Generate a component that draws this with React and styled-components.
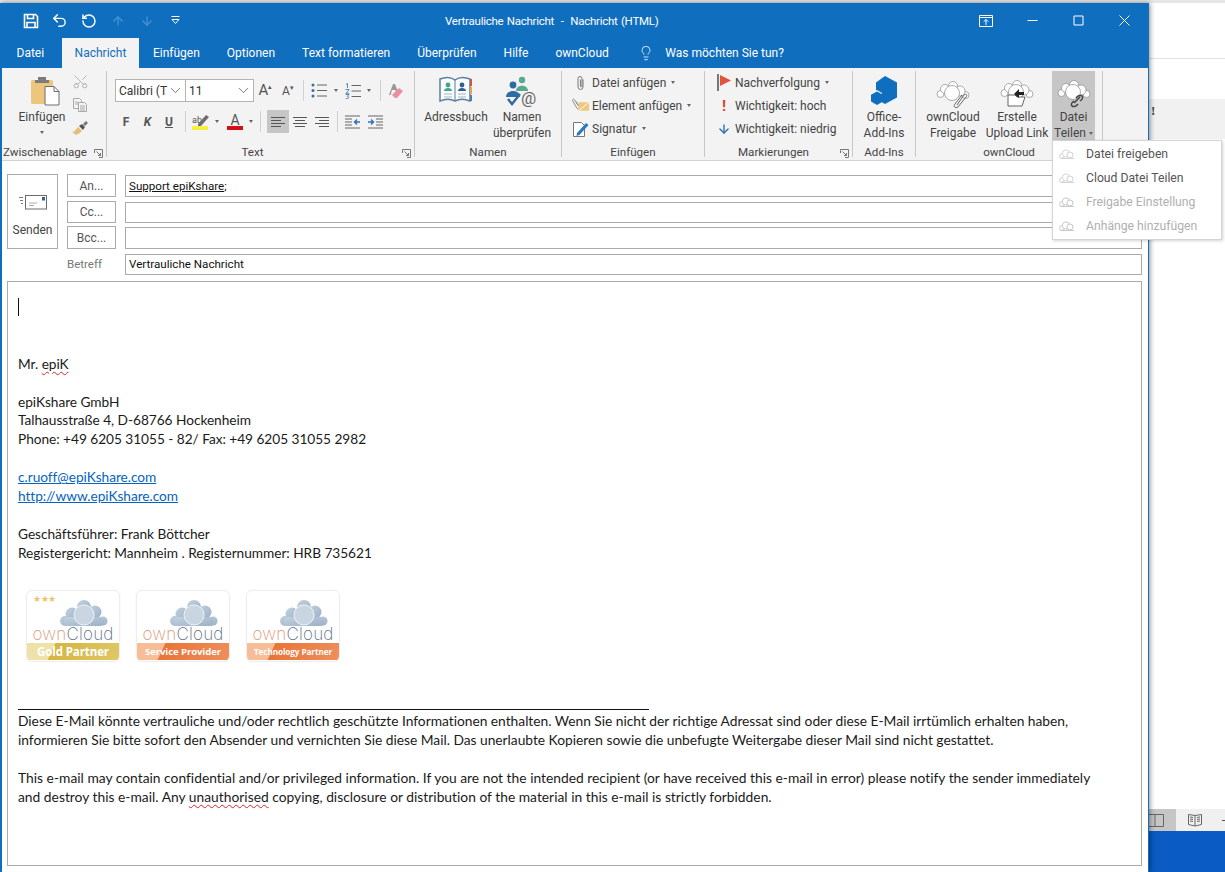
import React from "react";
import styled, { createGlobalStyle } from "styled-components";
import { ArrowUp, ArrowDown, ChevronDown, Lightbulb, RotateCcw, Scissors, Undo2 } from "lucide-react";

const UI = `Roboto, "Noto Sans", sans-serif`;

const GlobalStyle = createGlobalStyle`
  html, body { margin: 0; padding: 0; background: #fff; }
  body { font-family: ${UI}; overflow: hidden; }
  * { box-sizing: border-box; }
`;

/* ---------- small drawings ---------- */

const SaveIcon = () => (
  <svg width="16" height="16" viewBox="0 0 16 16" fill="none" stroke="#fff" strokeWidth="1.6">
    <path d="M1.5 1.5h11l2 2v11h-13z" />
    <path d="M4.5 1.5v4h6v-4M4 14.5v-5h8v5" />
  </svg>
);

const CustomizeIcon = () => (
  <svg width="11" height="11" viewBox="0 0 11 11" fill="none" stroke="#fff" strokeWidth="1">
    <path d="M1.5 1.5h8M2 4.5h7L5.5 8.5z" />
  </svg>
);

const RibbonDisplayIcon = () => (
  <svg width="14" height="12" viewBox="0 0 14 12" fill="none" stroke="#fff" strokeWidth="1">
    <path d="M.5 .5h13v11H.5zM.5 2.5h13M7 10V4.500M4.700 6.700 7 4.400l2.300 2.300" />
  </svg>
);

const MinIcon = () => (
  <svg width="11" height="11" viewBox="0 0 11 11" stroke="#fff"><path d="M.5 5.5h10" /></svg>
);
const MaxIcon = () => (
  <svg width="11" height="11" viewBox="0 0 11 11" fill="none" stroke="#fff"><path d="M1 1h9v9H1z" /></svg>
);
const CloseIcon = () => (
  <svg width="11" height="11" viewBox="0 0 11 11" stroke="#fff"><path d="M.5.5l10 10M10.5.5l-10 10" /></svg>
);

const PasteIcon = () => (
  <svg width="30" height="30" viewBox="0 0 30 30">
    <rect x="1" y="4" width="22" height="24" rx="1.5" fill="#ecc67d" />
    <path d="M8 4h8V1h-8z M5 4h14v3H5z" fill="#7b7b7b" />
    <path d="M15 10.500h9l5 5v13.500H15z" fill="#fff" stroke="#6e6e6e" />
    <path d="M24 10.500v5h5" fill="none" stroke="#6e6e6e" />
  </svg>
);

const CutIcon = styled(Scissors)`
  transform: rotate(-90deg);
`;

const CopyIcon = () => (
  <svg width="16" height="16" viewBox="0 0 16 16" fill="#f4f4f4" stroke="#a9a9a9">
    <path d="M1.500 1.500h6l2 2v8h-8z" />
    <path d="M6.500 5.500h6l2 2v7h-8z" />
    <path d="M3 5h3M3 7h3M8 9h5M8 11h5M8 13h5" fill="none" />
  </svg>
);

const PainterIcon = () => (
  <svg width="18" height="16" viewBox="0 0 18 16">
    <path d="M1 12c3 0 4-3 6-5l4 4c-2 2-4 3-6 4z" fill="#e4bf78" />
    <path d="M8 6l3-2 3 3-2 3z" fill="#555" />
    <path d="M12 4l3-3 2 2-3 3z" fill="#777" />
  </svg>
);

const Launcher = () => (
  <svg width="9" height="9" viewBox="0 0 9 9" fill="none" stroke="#777">
    <path d="M.5 4V.5h8v8H5" />
    <path d="M2.500 2.500l4 4M6.500 4v2.500H4" />
  </svg>
);

const BulletsIcon = () => (
  <svg width="16" height="15" viewBox="0 0 16 15" fill="none">
    <g fill="#3f6f9f"><circle cx="2" cy="2" r="1.500" /><circle cx="2" cy="7.500" r="1.500" /><circle cx="2" cy="13" r="1.500" /></g>
    <path d="M6 2h10M6 7.500h10M6 13h10" stroke="#666" />
  </svg>
);

const NumberIcon = () => (
  <svg width="16" height="16" viewBox="0 0 16 16" fill="none">
    <path d="M1 1.500l1.500-1V5M.5 6.500h3.500v.8L.8 10.300h3.400M.7 11.500h3.400l-1.800 1.800c2 0 2 2.200 0 2.200H.7" stroke="#3f6f9f" strokeWidth=".8" />
    <path d="M6.500 2.500h9.500M6.500 8h9.500M6.500 13.500h9.500" stroke="#666" />
  </svg>
);

const EraserIcon = () => (
  <svg width="16" height="16" viewBox="0 0 16 16">
    <path d="M1 12 5 1h2l3 8H8l-.7-2H4l-1.300 5z" fill="#9a9a9a" />
    <path d="M4 12l7-7 4 3-6 7H7z" fill="#ee8d9f" />
  </svg>
);

const HighlightIcon = () => (
  <svg width="18" height="18" viewBox="0 0 18 18">
    <text x="0" y="10" fontSize="9" fontFamily="Roboto, sans-serif" fill="#555">ab</text>
    <path d="M6 11 14 2l3 2-8 9H6z" fill="#6d6d6d" />
    <rect x="0" y="13" width="16" height="4" fill="#f6f03c" />
  </svg>
);

const FontColorBar = styled.span`
  display: block;
  width: 16px;
  height: 4px;
  background: #d40f14;
  margin-top: -1px;
`;

const AlignIcon = ({ type }) => {
  const lines = {
    left: ["M1 2.500h14", "M1 5.500h10", "M1 8.500h14", "M1 11.500h10"],
    center: ["M1 2.500h14", "M3 5.500h10", "M1 8.500h14", "M3 11.500h10"],
    right: ["M1 2.500h14", "M5 5.500h10", "M1 8.500h14", "M5 11.500h10"],
  }[type];
  return (
    <svg width="16" height="14" viewBox="0 0 16 14" fill="none" stroke="#555">
      {lines.map((d) => <path key={d} d={d} />)}
    </svg>
  );
};

const IndentIcon = ({ flip }) => (
  <svg width="16" height="14" viewBox="0 0 16 14" fill="none" style={flip ? { transform: "scaleX(-1)" } : undefined}>
    <path d="M1 1.500h15M9 4.500h7M9 7.500h7M9 10.500h7M1 13.500h15" stroke="#666" transform="translate(0 -.5)" />
    <path d="M1 7h5M4 4.500 6.500 7 4 9.500" stroke="#2f6fb0" strokeWidth="1.400" />
  </svg>
);

const AddressBookIcon = () => (
  <svg width="34" height="28" viewBox="0 0 34 28">
    <path d="M1 3c5-2 11-2 15 1 4-3 10-3 15-1v22c-5-2-11-2-15 0-4-2-10-2-15 0z" fill="#fbfbfb" stroke="#5b7fa3" strokeWidth="1.500" />
    <path d="M16 4v21" stroke="#5b7fa3" />
    <circle cx="9" cy="9" r="2.400" fill="#3fa58c" />
    <path d="M5 15c0-4 8-4 8 0z" fill="#3fa58c" />
    <circle cx="23" cy="9" r="2.400" fill="#2c5f93" />
    <path d="M19 15c0-4 8-4 8 0z" fill="#2c5f93" />
    <path d="M5 18h8M5 21h8M19 18h8M19 21h8" stroke="#a8b6c4" />
    <rect x="31" y="3" width="2" height="7" fill="#d1573a" />
    <rect x="31" y="11" width="2" height="7" fill="#e2a74e" />
    <rect x="31" y="19" width="2" height="6" fill="#4f7ea8" />
  </svg>
);

const NamesIcon = () => (
  <svg width="34" height="32" viewBox="0 0 34 32">
    <circle cx="17" cy="4" r="3.200" fill="#57a98f" />
    <path d="M11 15c0-7 12-7 12 0z" fill="#57a98f" />
    <circle cx="8" cy="9" r="3.400" fill="#2f6aa3" />
    <path d="M1 21c0-8 14-8 14 0z" fill="#2f6aa3" />
    <path d="M3 23l4 5 8-10" fill="none" stroke="#2f6aa3" strokeWidth="2.400" />
    <text x="16" y="28" fontSize="17" fontFamily="Roboto, sans-serif" fill="#666">@</text>
  </svg>
);

const ClipIcon = () => (
  <svg width="10" height="16" viewBox="0 0 10 16" fill="none" stroke="#777" strokeWidth="1">
    <path d="M7 4.500v7.500a2.500 2.500 0 0 1-5 0V3.500a2 2 0 0 1 4 0V11a.8.8 0 0 1-1.600 0V4.500" />
  </svg>
);

const AttachItemIcon = () => (
  <svg width="20" height="15" viewBox="0 0 20 15" fill="none">
    <path d="M8 8 4 2C3 0 1 1 2 3l4 7c1 2 4 1 3-1L5 3" stroke="#888" />
    <rect x="8" y="4" width="11" height="9" fill="#f0c77e" />
    <path d="M8 13l11-9" stroke="#fff" />
  </svg>
);

const SignatureIcon = () => (
  <svg width="18" height="18" viewBox="0 0 18 18" fill="none">
    <path d="M1.500 2.500h8l3 3v11h-11z" fill="#fff" stroke="#777" />
    <path d="M5 13 14 3l2.500 2-9 10-3 1z" fill="#2f79bd" />
  </svg>
);

const FlagIcon = () => (
  <svg width="14" height="17" viewBox="0 0 14 17">
    <rect x="0" y="0" width="2" height="17" fill="#777" />
    <path d="M3 1l11 5.500L3 12z" fill="#e0533d" />
  </svg>
);

const HexIcon = () => (
  <svg width="28" height="30" viewBox="0 0 28 30" fill="#106ebe">
    <path d="M15 0l12 6.500v15L15 28l-3-1.700V17l-5-3-1 .6V6.500z" />
    <path d="M7 15.500l6 3.300v6.700L7 29l-6-3.500v-6.700z" />
  </svg>
);

const CloudOutline = ({ children }) => (
  <svg width="34" height="28" viewBox="0 0 34 28" fill="#fff" stroke="#8a8a8a" strokeWidth=".7">
    <circle cx="4.500" cy="13" r="3.500" />
    <circle cx="29.500" cy="14" r="3.500" />
    <circle cx="24" cy="10" r="5" />
    <circle cx="9" cy="8" r="4.500" />
    <circle cx="17" cy="5" r="4.500" />
    <circle cx="16" cy="12" r="7.500" />
    {children}
  </svg>
);

const MenuCloud = ({ disabled }) => (
  <svg width="17" height="11" viewBox="0 0 17 11" fill="#fff" stroke={disabled ? "#bbb" : "#c9c9c9"} strokeWidth=".8">
    <circle cx="3" cy="7" r="2.400" />
    <circle cx="7" cy="4.500" r="3.600" />
    <circle cx="11" cy="6" r="3" />
    <path d="M2 9.500h13" />
  </svg>
);

const SendIcon = () => (
  <svg width="28" height="15" viewBox="0 0 28 15" fill="none">
    <path d="M0 2.500h4M1 5.500h3M2 8.500h2" stroke="#7a7a7a" />
    <rect x="6.500" y=".5" width="21" height="13.500" fill="#fff" stroke="#6b6b6b" />
    <path d="M10 8h8M10 10.500h5" stroke="#aaa" />
    <rect x="23" y="2" width="3" height="3.500" fill="#2f6496" />
  </svg>
);

const BookIcon = () => (
  <svg width="14" height="14" viewBox="0 0 14 14" fill="none" stroke="#666">
    <path d="M.5 1.500 7 2.500l6.500-1v10L7 13 .5 11.500zM7 2.500V13M2 4l3 .5M2 6l3 .5M2 8l3 .5M9 4.500 12 4M9 6.500 12 6M9 8.500 12 8" />
  </svg>
);

const SplitIcon = () => (
  <svg width="15" height="13" viewBox="0 0 15 13" fill="none" stroke="#666">
    <path d="M0 .5h14.500v12H0M6 .5v12" />
  </svg>
);

const BadgeCloud = () => (
  <svg width="48" height="28" viewBox="0 0 48 28">
    <defs>
      <linearGradient id="cloudFill" x1="0" y1="0" x2="1" y2="1">
        <stop offset="0" stopColor="#c4d2e0" />
        <stop offset="1" stopColor="#9bb0c6" />
      </linearGradient>
    </defs>
    <g fill="url(#cloudFill)">
      <circle cx="24" cy="7" r="7" />
      <circle cx="12" cy="14" r="6.500" />
      <circle cx="35" cy="12" r="6.500" />
      <circle cx="5" cy="21" r="5" />
      <circle cx="43" cy="21" r="4.500" />
      <rect x="4" y="17" width="40" height="9" rx="4" />
    </g>
    <circle cx="24" cy="15" r="10" fill="#c9d6e2" stroke="#eef3f7" strokeWidth="1" />
  </svg>
);

/* ---------- background window ---------- */

const Desktop = styled.div`
  position: relative;
  width: 1225px;
  height: 872px;
  overflow: hidden;
  background: #fff;
`;

const BackApp = styled.div`
  display: flex;
  flex-direction: column;
  height: 100%;
`;

const BackTop = styled.div`
  height: 3px;
  background: #e6e6e6;
`;

const BackHeader = styled.div`
  height: 56px;
  border-bottom: 1px solid #e2e2e2;
`;

const BackGap = styled.div`
  height: ${(p) => p.$h}px;
  flex: ${(p) => (p.$grow ? 1 : "none")};
`;

const BackBand = styled.div`
  height: 40px;
  padding: 4px 0 0 1151px;
  background: #f1f1f1;
  font: bold 13px "Liberation Serif", serif;
  color: #444;
`;

const BackStatus = styled.div`
  display: flex;
  height: 22px;
  padding-left: 1149px;
  background: #f0f0f0;
`;

const StatusCell = styled.div`
  display: flex;
  align-items: center;
  justify-content: ${(p) => (p.$active ? "flex-start" : "center")};
  width: ${(p) => p.$w}px;
  background: ${(p) => (p.$active ? "#c6c6c6" : "transparent")};
`;

const ZoomDash = styled.span`
  align-self: center;
  width: 3px;
  height: 1px;
  margin-left: 8px;
  background: #555;
`;

const BackTaskbar = styled.div`
  height: 41px;
  background: #0a5bc4;
`;

/* ---------- compose window ---------- */

const Window = styled.div`
  position: absolute;
  left: 0;
  top: 3px;
  width: 1149px;
  height: 869px;
  display: flex;
  flex-direction: column;
  background: #fff;
  border-left: 2px solid #106ebe;
  border-right: 1px solid #106ebe;
  box-shadow: 1px 0 5px rgba(0, 0, 0, 0.45);
`;

const TitleBar = styled.div`
  position: relative;
  display: flex;
  align-items: center;
  justify-content: space-between;
  flex: none;
  height: 35px;
  padding: 0 0 0 14px;
  background: #106ebe;
  color: #fff;
`;

const QuickAccess = styled.div`
  display: flex;
  align-items: center;
`;

const QuickButton = styled.span`
  display: flex;
  align-items: center;
  justify-content: center;
  width: 29px;
  height: 24px;
  color: ${(p) => (p.$dim ? "#4a93d6" : "#fff")};
`;

const WindowTitle = styled.div`
  position: absolute;
  left: 443px;
  top: 10px;
  font-size: 11.500px;
  letter-spacing: -0.25px;
  word-spacing: 0.7px;
  line-height: 16px;
  white-space: pre;
`;

const WindowButtons = styled.div`
  display: flex;
  padding-right: 1px;
`;

const WindowButton = styled.span`
  display: flex;
  align-items: center;
  justify-content: center;
  width: 46px;
  height: 30px;
`;

const TabBar = styled.div`
  display: flex;
  align-items: stretch;
  flex: none;
  height: 30px;
  padding-left: 1px;
  background: #106ebe;
`;

const Tab = styled.div`
  display: flex;
  align-items: center;
  padding: 0 ${(p) => p.$pad || 13.5}px;
  margin-right: ${(p) => p.$mr || 0}px;
  font-size: 12px;
  color: ${(p) => (p.$active ? "#106ebe" : "#fff")};
  background: ${(p) => (p.$active ? "#f3f3f3" : "transparent")};
  white-space: nowrap;
`;

const TellMe = styled.div`
  display: flex;
  align-items: center;
  gap: 11px;
  margin-left: 16px;
  font-size: 12px;
  color: #fff;
`;

const Ribbon = styled.div`
  display: flex;
  flex: none;
  height: 93px;
  padding-top: 3px;
  background: #f3f3f3;
  border-bottom: 1px solid #d2d2d2;
  color: #444;
  font-size: 12px;
`;

const Group = styled.div`
  display: flex;
  flex-direction: column;
  flex: none;
  width: ${(p) => p.$w}px;
  height: 86px;
  border-right: 1px solid #c8c8c8;
`;

const GroupBody = styled.div`
  display: ${(p) => (p.$col ? "block" : "flex")};
  flex: none;
  height: 74px;
  padding-left: ${(p) => p.$pl || 0}px;
  padding-top: ${(p) => p.$pt || 0}px;
`;

const GroupFooter = styled.div`
  position: relative;
  flex: none;
  height: 15px;
  line-height: 15px;
  font-size: 11.600px;
  text-align: center;
  padding-right: ${(p) => p.$pr || 0}px;
  white-space: nowrap;
`;

const LauncherSpot = styled.span`
  position: absolute;
  right: 3px;
  top: 4px;
  display: flex;
`;

const LargeButton = styled.div`
  display: flex;
  flex-direction: column;
  align-items: center;
  flex: none;
  width: ${(p) => p.$w}px;
  height: 70px;
  padding-top: 5px;
  text-align: center;
  line-height: 16px;
  white-space: nowrap;
  background: ${(p) => (p.$active ? "#c6c6c6" : "transparent")};
  margin-left: ${(p) => p.$ml || 0}px;
`;

const LargeIcon = styled.span`
  display: flex;
  align-items: flex-start;
  justify-content: center;
  height: 33px;
  padding-top: ${(p) => p.$pt || 0}px;
  padding-left: ${(p) => p.$pl || 0}px;
`;

const Caret = styled.span`
  display: inline-block;
  width: 0;
  height: 0;
  margin-left: ${(p) => p.$ml ?? 3}px;
  margin-top: ${(p) => p.$mt || 0}px;
  vertical-align: middle;
  border-left: 2.500px solid transparent;
  border-right: 2.500px solid transparent;
  border-top: 3px solid #666;
`;

const SmallTools = styled.div`
  display: flex;
  flex-direction: column;
  align-items: center;
  gap: 7px;
  width: 20px;
  padding-top: 2px;
`;

const ToolRow = styled.div`
  display: flex;
  align-items: center;
  height: 23px;
  margin-bottom: 8px;
`;

const Combo = styled.div`
  display: flex;
  align-items: center;
  justify-content: space-between;
  width: ${(p) => p.$w}px;
  height: 23px;
  margin-left: ${(p) => p.$ml || 0}px;
  padding: 0 1px 0 3px;
  background: #fff;
  border: 1px solid #b4b4b4;
  font-size: 12px;
  color: #333;
  overflow: hidden;
  white-space: nowrap;
`;

const Cell = styled.span`
  display: flex;
  flex-direction: column;
  align-items: center;
  justify-content: center;
  flex: none;
  width: ${(p) => p.$w}px;
  height: 23px;
  background: ${(p) => (p.$active ? "#c6c6c6" : "transparent")};
`;

const ToolSep = styled.span`
  display: flex;
  justify-content: center;
  flex: none;
  width: ${(p) => p.$w}px;
  &::after {
    content: "";
    width: 1px;
    height: 21px;
    background: #d0d0d0;
  }
`;

const Letter = styled.span`
  font-size: ${(p) => p.$size || 12}px;
  font-weight: ${(p) => p.$weight || 400};
  font-style: ${(p) => (p.$italic ? "italic" : "normal")};
  text-decoration: ${(p) => (p.$underline ? "underline" : "none")};
  line-height: 1;
  color: #555;
`;

const ListRow = styled.div`
  display: flex;
  align-items: center;
  height: 23px;
  gap: 2px;
  white-space: nowrap;
`;

const ListIcon = styled.span`
  display: flex;
  align-items: center;
  justify-content: center;
  width: ${(p) => p.$w || 19}px;
  font-weight: bold;
  font-size: 15px;
  color: #d9432e;
`;

/* ---------- address form ---------- */

const Compose = styled.div`
  display: flex;
  flex-direction: column;
  flex: 1;
  padding: 13px 6px 6px 5px;
  min-height: 0;
`;

const AddressGrid = styled.div`
  display: grid;
  grid-template-columns: 51px 49px 1fr;
  grid-template-rows: 23px 22px 23px 22px;
  column-gap: 9px;
  row-gap: 3.500px;
  margin-bottom: 6px;
`;

const SendButton = styled.div`
  grid-row: 1 / 4;
  display: flex;
  flex-direction: column;
  align-items: center;
  padding-top: 20px;
  gap: 13px;
  border: 1px solid #ababab;
  font-size: 12px;
  color: #444;
`;

const FieldButton = styled.div`
  display: flex;
  align-items: center;
  justify-content: center;
  border: 1px solid #ababab;
  font-size: 12px;
  color: #555;
`;

const FieldInput = styled.div`
  grid-column: 3;
  display: flex;
  align-items: center;
  padding-left: 3px;
  margin-top: ${(p) => p.$mt || 0}px;
  border: 1px solid #ababab;
  font-size: 11.600px;
  color: #111;
`;

const Recipient = styled.span`
  text-decoration: underline;
`;

const SubjectLabel = styled.div`
  grid-column: 2;
  display: flex;
  align-items: center;
  font-size: 11.500px;
  color: #777;
`;

const MailBody = styled.div`
  flex: 1;
  padding: 16.500px 0 0 10px;
  border: 1px solid #ababab;
  font-family: Lato, "Noto Sans", sans-serif;
  font-size: 13.700px;
  line-height: 18.900px;
  color: #1a1a1a;
  white-space: nowrap;
`;

const Para = styled.p`
  margin: 0 0 ${(p) => p.$after ?? 18.9}px;
  letter-spacing: ${(p) => p.$ls ?? -0.04}px;
`;

const LegalLine = styled.span`
  font-size: 13.800px;
  letter-spacing: ${(p) => p.$ls}px;
`;

const TextCaret = styled.span`
  display: inline-block;
  width: 1px;
  height: 18px;
  margin-top: -3px;
  background: #111;
  vertical-align: middle;
`;

const Misspelled = styled.span`
  text-decoration: underline wavy #d8262c 1px;
  text-underline-offset: 2px;
`;

const MailLink = styled.a`
  color: #0563c1;
  text-decoration: underline;
`;

const BadgeRow = styled.div`
  display: flex;
  gap: 16px;
  margin: 27px 0 47px 8px;
`;

const Badge = styled.div`
  position: relative;
  display: flex;
  flex-direction: column;
  align-items: center;
  width: 94px;
  height: 72px;
  padding-top: 9px;
  border: 1px solid #eeeeee;
  border-radius: 6px;
  box-shadow: 0 0 2px rgba(0, 0, 0, 0.06);
  overflow: hidden;
  font-family: "Open Sans", sans-serif;
`;

const BadgeStars = styled.span`
  position: absolute;
  left: 6px;
  top: 2px;
  font-size: 9px;
  line-height: 12px;
  letter-spacing: -0.5px;
  color: #eec36b;
`;

const BadgeCloudWrap = styled.span`
  display: flex;
  align-self: flex-end;
  margin-right: 11px;
`;

const BadgeLogo = styled.div`
  margin-top: -2px;
  font-family: Inter, sans-serif;
  font-weight: 200;
  font-size: 17px;
  line-height: 16px;
  letter-spacing: 0.2px;
  white-space: nowrap;
`;

const LogoOwn = styled.span`
  color: #dc9878;
`;

const LogoCloud = styled.span`
  color: #5d6f85;
`;

const BadgeBand = styled.div`
  align-self: stretch;
  height: 17px;
  margin-top: auto;
  margin-bottom: 1px;
  line-height: 17px;
  text-align: center;
  font-size: ${(p) => p.$size}px;
  font-weight: 700;
  color: #fff;
  letter-spacing: -0.1px;
  background: ${(p) => p.$bg};
`;

const Rule = styled.div`
  width: 631px;
  height: 1px;
  margin-bottom: 2.500px;
  background: #111;
`;

/* ---------- dropdown ---------- */

const Menu = styled.div`
  position: absolute;
  left: 1052px;
  top: 140px;
  width: 170px;
  height: 100px;
  padding: 1px 2px;
  background: #fff;
  border: 1px solid #d4d4d4;
  box-shadow: 1px 1px 3px rgba(0, 0, 0, 0.18);
  font-size: 12.200px;
`;

const MenuItem = styled.div`
  display: flex;
  align-items: center;
  height: 24px;
  gap: 10px;
  padding-left: 4px;
  color: ${(p) => (p.$disabled ? "#b0b0b0" : "#555")};
  white-space: nowrap;
`;

const chevron = <ChevronDown size={17} strokeWidth={1} color="#444" />;

const App = () => (
  <Desktop>
    <GlobalStyle />
    <BackApp>
      <BackTop />
      <BackHeader />
      <BackGap $h={40} />
      <BackBand>!</BackBand>
      <BackGap $grow />
      <BackStatus>
        <StatusCell $w={27} $active><SplitIcon /></StatusCell>
        <StatusCell $w={38}><BookIcon /></StatusCell>
        <ZoomDash />
      </BackStatus>
      <BackTaskbar />
    </BackApp>

    <Window>
      <TitleBar>
        <QuickAccess>
          <QuickButton><SaveIcon /></QuickButton>
          <QuickButton><Undo2 size={17} strokeWidth={2} /></QuickButton>
          <QuickButton><RotateCcw size={16} strokeWidth={2.2} /></QuickButton>
          <QuickButton $dim><ArrowUp size={14} strokeWidth={2.2} /></QuickButton>
          <QuickButton $dim><ArrowDown size={14} strokeWidth={2.2} /></QuickButton>
          <QuickButton><CustomizeIcon /></QuickButton>
        </QuickAccess>
        <WindowTitle>{"Vertrauliche Nachricht  -  Nachricht (HTML)"}</WindowTitle>
        <WindowButtons>
          <WindowButton><RibbonDisplayIcon /></WindowButton>
          <WindowButton><MinIcon /></WindowButton>
          <WindowButton><MaxIcon /></WindowButton>
          <WindowButton><CloseIcon /></WindowButton>
        </WindowButtons>
      </TitleBar>

      <TabBar>
        <Tab $mr={4}>Datei</Tab>
        <Tab $active $pad={13}>Nachricht</Tab>
        <Tab>Einfügen</Tab>
        <Tab>Optionen</Tab>
        <Tab>Text formatieren</Tab>
        <Tab>Überprüfen</Tab>
        <Tab>Hilfe</Tab>
        <Tab>ownCloud</Tab>
        <TellMe><Lightbulb size={16} strokeWidth={1.2} />Was möchten Sie tun?</TellMe>
      </TabBar>

      <Ribbon>
        <Group $w={105}>
          <GroupBody $pl={12}>
            <LargeButton $w={56}>
              <LargeIcon $pl={6}><PasteIcon /></LargeIcon>
              Einfügen
              <Caret $ml={0} $mt={6} />
            </LargeButton>
            <SmallTools>
              <CutIcon size={17} strokeWidth={1.2} color="#a8a8a8" />
              <CopyIcon />
              <PainterIcon />
            </SmallTools>
          </GroupBody>
          <GroupFooter $pr={18}>
            Zwischenablage
            <LauncherSpot><Launcher /></LauncherSpot>
          </GroupFooter>
        </Group>

        <Group $w={308}>
          <GroupBody $col $pl={8} $pt={8}>
            <ToolRow>
              <Combo $w={71}>Calibri (T{chevron}</Combo>
              <Combo $w={69} $ml={-1}>11{chevron}</Combo>
              <Cell $w={23}><Letter $size={15}>A<sup style={{ fontSize: 7 }}>▴</sup></Letter></Cell>
              <Cell $w={22}><Letter $size={12}>A<sup style={{ fontSize: 7 }}>▾</sup></Letter></Cell>
              <ToolSep $w={8} />
              <Cell $w={24}><BulletsIcon /></Cell>
              <Cell $w={10}><Caret $ml={0} /></Cell>
              <Cell $w={24}><NumberIcon /></Cell>
              <Cell $w={8}><Caret $ml={0} /></Cell>
              <ToolSep $w={14} />
              <Cell $w={18}><EraserIcon /></Cell>
            </ToolRow>
            <ToolRow>
              <Cell $w={22}><Letter $weight={700}>F</Letter></Cell>
              <Cell $w={21}><Letter $weight={700} $italic>K</Letter></Cell>
              <Cell $w={22}><Letter $weight={700} $underline>U</Letter></Cell>
              <ToolSep $w={10} />
              <Cell $w={22}><HighlightIcon /></Cell>
              <Cell $w={10}><Caret $ml={0} /></Cell>
              <Cell $w={26}><Letter $size={14}>A</Letter><FontColorBar /></Cell>
              <Cell $w={6}><Caret $ml={0} /></Cell>
              <ToolSep $w={13} />
              <Cell $w={22} $active><AlignIcon type="left" /></Cell>
              <Cell $w={22}><AlignIcon type="center" /></Cell>
              <Cell $w={22}><AlignIcon type="right" /></Cell>
              <ToolSep $w={9} />
              <Cell $w={22}><IndentIcon flip /></Cell>
              <Cell $w={22}><IndentIcon /></Cell>
            </ToolRow>
          </GroupBody>
          <GroupFooter $pr={16}>
            Text
            <LauncherSpot><Launcher /></LauncherSpot>
          </GroupFooter>
        </Group>

        <Group $w={147}>
          <GroupBody $pl={6}>
            <LargeButton $w={70}>
              <LargeIcon><AddressBookIcon /></LargeIcon>
              Adressbuch
            </LargeButton>
            <LargeButton $w={62}>
              <LargeIcon><NamesIcon /></LargeIcon>
              Namen<br />überprüfen
            </LargeButton>
          </GroupBody>
          <GroupFooter>Namen</GroupFooter>
        </Group>

        <Group $w={143}>
          <GroupBody $col $pl={9}>
            <ListRow><ListIcon><ClipIcon /></ListIcon>Datei anfügen<Caret /></ListRow>
            <ListRow><ListIcon><AttachItemIcon /></ListIcon>Element anfügen<Caret /></ListRow>
            <ListRow><ListIcon><SignatureIcon /></ListIcon>Signatur<Caret /></ListRow>
          </GroupBody>
          <GroupFooter>Einfügen</GroupFooter>
        </Group>

        <Group $w={148}>
          <GroupBody $col $pl={10}>
            <ListRow><ListIcon $w={18}><FlagIcon /></ListIcon>Nachverfolgung<Caret /></ListRow>
            <ListRow><ListIcon $w={18}>!</ListIcon>Wichtigkeit: hoch</ListRow>
            <ListRow><ListIcon $w={18}><ArrowDown size={14} strokeWidth={2.4} color="#2f6fb0" /></ListIcon>Wichtigkeit: niedrig</ListRow>
          </GroupBody>
          <GroupFooter $pr={10}>
            Markierungen
            <LauncherSpot><Launcher /></LauncherSpot>
          </GroupFooter>
        </Group>

        <Group $w={63}>
          <GroupBody>
            <LargeButton $w={62}>
              <LargeIcon><HexIcon /></LargeIcon>
              Office-<br />Add-Ins
            </LargeButton>
          </GroupBody>
          <GroupFooter>Add-Ins</GroupFooter>
        </Group>

        <Group $w={187}>
          <GroupBody $pl={5}>
            <LargeButton $w={64}>
              <LargeIcon $pt={5}>
                <CloudOutline>
                  <path d="M21 24 28 14c2-2 4 0 2 2l-8 10c-3 2-5-1-3-3l7-9" fill="none" stroke="#555" strokeWidth=".9" />
                </CloudOutline>
              </LargeIcon>
              ownCloud<br />Freigabe
            </LargeButton>
            <LargeButton $w={64}>
              <LargeIcon $pt={4}>
                <CloudOutline>
                  <path d="M8 15h7l2 2h8l-3 9H8z" fill="#fff" stroke="#555" strokeWidth=".9" />
                  <path d="M14 14l5-5v3h5v3h-5v3z" fill="#222" stroke="none" />
                </CloudOutline>
              </LargeIcon>
              Erstelle<br />Upload Link
            </LargeButton>
            <LargeButton $w={43} $ml={3} $active>
              <LargeIcon $pt={4}>
                <CloudOutline>
                  <path d="M17 23l6-6M19 18c2-3 5-3 6-2s1 3-2 5M21 24c-2 3-5 3-6 2s-1-3 2-5" fill="none" stroke="#444" strokeWidth="1.500" />
                </CloudOutline>
              </LargeIcon>
              Datei<br />
              <span>Teilen<Caret /></span>
            </LargeButton>
          </GroupBody>
          <GroupFooter>ownCloud</GroupFooter>
        </Group>
      </Ribbon>

      <Compose>
        <AddressGrid>
          <SendButton><SendIcon />Senden</SendButton>
          <FieldButton>An...</FieldButton>
          <FieldInput $mt={1}><Recipient>Support epiKshare</Recipient>;</FieldInput>
          <FieldButton>Cc...</FieldButton>
          <FieldInput $mt={1} />
          <FieldButton>Bcc...</FieldButton>
          <FieldInput $mt={1} />
          <SubjectLabel>Betreff</SubjectLabel>
          <FieldInput $mt={1}>Vertrauliche Nachricht</FieldInput>
        </AddressGrid>

        <MailBody>
          <Para $after={37.8}><TextCaret /></Para>
          <Para>Mr. <Misspelled>epiK</Misspelled></Para>
          <Para>
            epiKshare GmbH<br />
            Talhausstraße 4, D-68766 Hockenheim<br />
            Phone: +49 6205 31055 - 82/ Fax: +49 6205 31055 2982
          </Para>
          <Para>
            <MailLink href="#">c.ruoff@epiKshare.com</MailLink><br />
            <MailLink href="#">http://www.epiKshare.com</MailLink>
          </Para>
          <Para $after={0}>
            Geschäftsführer: Frank Böttcher<br />
            Registergericht: Mannheim . Registernummer: HRB 735621
          </Para>

          <BadgeRow>
            <Badge>
              <BadgeStars>★★★</BadgeStars>
              <BadgeCloudWrap><BadgeCloud /></BadgeCloudWrap>
              <BadgeLogo><LogoOwn>own</LogoOwn><LogoCloud>Cloud</LogoCloud></BadgeLogo>
              <BadgeBand $size={11.5} $bg="linear-gradient(115deg, #efe2a8 0 28%, #d6b640 29%, #dfc766 100%)">Gold Partner</BadgeBand>
            </Badge>
            <Badge>
              <BadgeCloudWrap><BadgeCloud /></BadgeCloudWrap>
              <BadgeLogo><LogoOwn>own</LogoOwn><LogoCloud>Cloud</LogoCloud></BadgeLogo>
              <BadgeBand $size={9.6} $bg="linear-gradient(115deg, #f6bd97 0 28%, #ea7438 29%, #ee8f5c 100%)">Service Provider</BadgeBand>
            </Badge>
            <Badge>
              <BadgeCloudWrap><BadgeCloud /></BadgeCloudWrap>
              <BadgeLogo><LogoOwn>own</LogoOwn><LogoCloud>Cloud</LogoCloud></BadgeLogo>
              <BadgeBand $size={8.2} $bg="linear-gradient(115deg, #f6bd97 0 28%, #ea7438 29%, #ee8f5c 100%)">Technology Partner</BadgeBand>
            </Badge>
          </BadgeRow>

          <Rule />
          <Para $after={19} $ls={0}>
            <LegalLine $ls={-0.023}>Diese E-Mail könnte vertrauliche und/oder rechtlich geschützte Informationen enthalten. Wenn Sie nicht der richtige Adressat sind oder diese E-Mail irrtümlich erhalten haben,</LegalLine><br />
            <LegalLine $ls={-0.023}>informieren Sie bitte sofort den Absender und vernichten Sie diese Mail. Das unerlaubte Kopieren sowie die unbefugte Weitergabe dieser Mail sind nicht gestattet.</LegalLine>
          </Para>
          <Para $ls={0}>
            <LegalLine $ls={0.011}>This e-mail may contain confidential and/or privileged information. If you are not the intended recipient (or have received this e-mail in error) please notify the sender immediately</LegalLine><br />
            <LegalLine $ls={0.011}>and destroy this e-mail. Any <Misspelled>unauthorised</Misspelled> copying, disclosure or distribution of the material in this e-mail is strictly forbidden.</LegalLine>
          </Para>
        </MailBody>
      </Compose>
    </Window>

    <Menu>
      <MenuItem><MenuCloud />Datei freigeben</MenuItem>
      <MenuItem><MenuCloud />Cloud Datei Teilen</MenuItem>
      <MenuItem $disabled><MenuCloud disabled />Freigabe Einstellung</MenuItem>
      <MenuItem $disabled><MenuCloud disabled />Anhänge hinzufügen</MenuItem>
    </Menu>
  </Desktop>
);

export default App;
